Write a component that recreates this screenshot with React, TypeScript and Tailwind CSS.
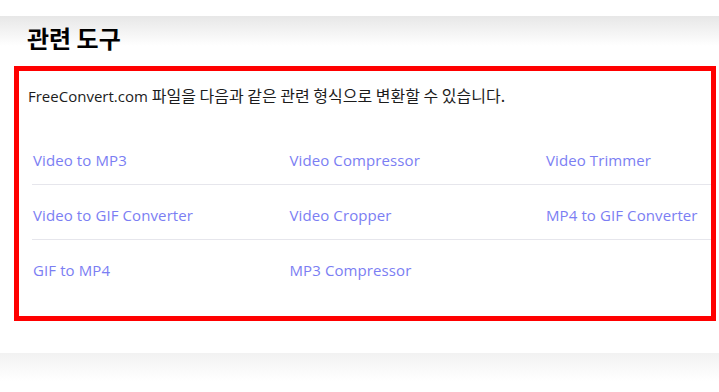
import React from 'react';

const rows: string[][] = [
  ['Video to MP3', 'Video Compressor', 'Video Trimmer'],
  ['Video to GIF Converter', 'Video Cropper', 'MP4 to GIF Converter'],
  ['GIF to MP4', 'MP3 Compressor', ''],
];

export default function App() {
  return (
    <div className="w-[719px] h-[392px] overflow-hidden bg-white font-['Open_Sans','Noto_Sans_CJK_KR',sans-serif]">
      <div className="h-[16px] bg-white" />
      <section className="h-[337px] pt-[6px] pl-[14px] pr-[3px] bg-[linear-gradient(to_bottom,#e7e7e7,#ffffff_30px)]">
        <h2 className="ml-[13px] mb-[12px] text-[24px] leading-[32px] font-bold text-black font-['Noto_Sans_CJK_KR',sans-serif]">
          관련 도구
        </h2>
        <div className="h-[255px] border-[5px] border-[#ff0000] pt-[13px] pl-[9px] pb-[22px] overflow-hidden">
          <p className="h-[24px] text-[15px] leading-[24px] text-[#1c1c1c] whitespace-nowrap">
            FreeConvert.com{' '}
            <span className="text-[16px] leading-[20px] font-['Noto_Sans_CJK_KR',sans-serif]">
              파일을 다음과 같은 관련 형식으로 변환할 수 있습니다.
            </span>
          </p>
          <div className="mt-[22px] ml-[4px] w-[770px]">
            {rows.map((row, i) => (
              <div
                key={i}
                className={`flex h-[54px] pt-[18px] ${i < rows.length - 1 ? 'border-b border-[#e6e6ec] h-[55px]' : ''}`}
              >
                {row.map((label, j) => (
                  <a
                    key={j}
                    href="#"
                    className="w-[256.5px] shrink-0 pl-[1px] text-[15px] leading-[24px] tracking-[0.1px] text-[#7b7ef3] whitespace-nowrap"
                  >
                    {label}
                  </a>
                ))}
              </div>
            ))}
          </div>
        </div>
      </section>
      <div className="h-[39px] bg-[linear-gradient(to_bottom,#f2f2f2,#ffffff_28px)]" />
    </div>
  );
}
